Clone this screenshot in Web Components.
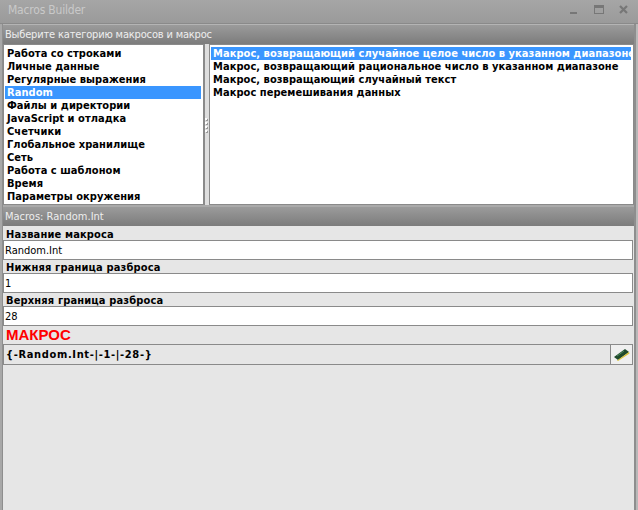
<!DOCTYPE html>
<html>
<head>
<meta charset="utf-8">
<style>
  html, body { margin: 0; height: 100%; }
  body { background: #e6e6e6; font-family: "DejaVu Sans", sans-serif; overflow: hidden; }
</style>
</head>
<body>
<macro-window></macro-window>
<script>
class TitleBar extends HTMLElement {
  constructor() {
    super();
    this.attachShadow({ mode: 'open' });
    this.shadowRoot.innerHTML = `
      <style>
        :host {
          display: flex;
          align-items: center;
          height: 23px;
          padding: 0 8px 4px 8px;
          box-sizing: border-box;
          background: linear-gradient(#a6a6a6, #9a9a9a);
          color: #c9c9c9;
          font: 12px "DejaVu Sans Condensed", "DejaVu Sans", sans-serif;
          font-stretch: condensed;
          letter-spacing: -.2px;
        }
        .name { flex: 1; }
        svg { display: block; }
      </style>
      <div class="name"><slot></slot></div>
      <svg width="60" height="14" viewBox="0 0 60 14">
        <rect x="0" y="9" width="7" height="2" fill="#777"/>
        <rect x="24.5" y="2.5" width="9" height="8" fill="none" stroke="#777"/>
        <rect x="24" y="2" width="10" height="3" fill="#777"/>
        <path d="M50 3l7 7M57 3l-7 7" stroke="#777" stroke-width="2.2" fill="none"/>
      </svg>
    `;
  }
}

class PanelHeader extends HTMLElement {
  constructor() {
    super();
    this.attachShadow({ mode: 'open' });
    this.shadowRoot.innerHTML = `
      <style>
        :host {
          display: flex;
          align-items: center;
          height: 19px;
          padding-left: 2px;
          box-sizing: border-box;
          background: linear-gradient(#9b9b9b, #7c7c7c);
          color: #eee;
          font: 11px "DejaVu Sans Condensed", "DejaVu Sans", sans-serif;
          font-stretch: condensed;
        }
      </style>
      <slot></slot>
    `;
  }
}

class ListBox extends HTMLElement {
  constructor() {
    super();
    this.attachShadow({ mode: 'open' });
    this.shadowRoot.innerHTML = `
      <style>
        :host {
          display: block;
          box-sizing: border-box;
          height: 100%;
          background: #fff;
          border: 1px solid #8a8a8a;
          padding: 2px 2px 0 1px;
          overflow: hidden;
        }
      </style>
      <slot></slot>
    `;
  }
}

class ListRow extends HTMLElement {
  constructor() {
    super();
    this.attachShadow({ mode: 'open' });
    this.shadowRoot.innerHTML = `
      <style>
        :host {
          display: block;
          height: 13px;
          padding-left: 2px;
          color: #000;
          font: bold 11px/13px "DejaVu Sans Condensed", "DejaVu Sans", sans-serif;
          font-stretch: condensed;
          letter-spacing: .05px;
          white-space: nowrap;
          overflow: hidden;
        }
        :host([selected]) { background: #3a96ff; color: #fff; }
      </style>
      <slot></slot>
    `;
  }
}

class FormField extends HTMLElement {
  constructor() {
    super();
    this.attachShadow({ mode: 'open' });
    this.shadowRoot.innerHTML = `
      <style>
        :host { display: block; }
        .label {
          height: 13px;
          padding-left: 3px;
          font: bold 11px/15px "DejaVu Sans Condensed", "DejaVu Sans", sans-serif;
          font-stretch: condensed;
          letter-spacing: .15px;
          color: #000;
        }
        .box {
          height: 18px;
          padding-left: 1px;
          background: #fff;
          border: 1px solid #8a8a8a;
          font: 11px/20px "DejaVu Sans Condensed", "DejaVu Sans", sans-serif;
          font-stretch: condensed;
          color: #000;
          overflow: hidden;
        }
      </style>
      <div class="label"></div>
      <div class="box"><slot></slot></div>
    `;
  }
  connectedCallback() {
    this.shadowRoot.querySelector('.label').textContent = this.dataset.label;
  }
}

class MacroOutput extends HTMLElement {
  constructor() {
    super();
    this.attachShadow({ mode: 'open' });
    this.shadowRoot.innerHTML = `
      <style>
        :host { display: block; }
        .title {
          height: 18px;
          padding-left: 3px;
          font: bold 15px/18px "Liberation Sans", sans-serif;
          color: #f00;
        }
        .row {
          display: flex;
          align-items: stretch;
          height: 19px;
          background: #e6e6e6;
          border: 1px solid #8a8a8a;
        }
        .code {
          flex: 1;
          padding-left: 2px;
          font: bold 11px/20px "DejaVu Sans Condensed", "DejaVu Sans", sans-serif;
          font-stretch: condensed;
          letter-spacing: .65px;
          color: #000;
        }
        .btn {
          width: 21px;
          display: flex;
          align-items: center;
          justify-content: center;
          background: #efefef;
          border-left: 1px solid #8a8a8a;
        }
      </style>
      <div class="title">МАКРОС</div>
      <div class="row">
        <div class="code"><slot></slot></div>
        <div class="btn">
          <svg width="17" height="13" viewBox="0 0 17 13">
            <path d="M1 9L12 1l4 3L5 12z" fill="#1f4a2c"/>
            <path d="M4 12.5L16 4l.5 1.5L5 13z" fill="#d8c23a"/>
            <path d="M4 8l7-5" stroke="#4f8a5c" fill="none"/>
          </svg>
        </div>
      </div>
    `;
  }
}

class MacroWindow extends HTMLElement {
  constructor() {
    super();
    this.attachShadow({ mode: 'open' });
    this.shadowRoot.innerHTML = `
      <style>
        :host {
          display: flex;
          flex-direction: column;
          height: 510px;
          background: #b4b4b4;
        }
        .shell {
          flex: 1;
          display: flex;
          flex-direction: column;
          border-top: 1px solid #8a8a8a;
          padding-top: 1px;
          padding-left: 3px;
          padding-right: 4px;
          background: linear-gradient(90deg, #a8a8a8 0 2px, #8e8e8e 2px 3px, transparent 3px calc(100% - 4px), #8e8e8e calc(100% - 4px) calc(100% - 2px), #b8b8b8 calc(100% - 2px));
        }
        .lists {
          display: grid;
          grid-template-columns: 201px 5px 425px;
          height: 161px;
        }
        .splitter {
          display: flex;
          flex-direction: column;
          align-items: flex-start;
          justify-content: center;
          gap: 2px;
          padding-left: 1px;
          background: #dedede;
          box-shadow: inset 1px 0 #8a8a8a;
        }
        .splitter i { width: 2px; height: 2px; background: #fff; box-shadow: 1px 1px #999; }
        .lower { flex: 1; background: #e6e6e6; padding: 1px 1px 0 0; }
        .gap { height: 2px; background: #aaa; }
      </style>
      <title-bar>Macros Builder</title-bar>
      <div class="shell">
        <panel-header style="letter-spacing:-.17px">Выберите категорию макросов и макрос</panel-header>
        <div class="lists">
          <list-box>
            <list-row>Работа со строками</list-row>
            <list-row>Личные данные</list-row>
            <list-row>Регулярные выражения</list-row>
            <list-row selected>Random</list-row>
            <list-row>Файлы и директории</list-row>
            <list-row>JavaScript и отладка</list-row>
            <list-row>Счетчики</list-row>
            <list-row>Глобальное хранилище</list-row>
            <list-row>Сеть</list-row>
            <list-row>Работа с шаблоном</list-row>
            <list-row>Время</list-row>
            <list-row>Параметры окружения</list-row>
          </list-box>
          <div class="splitter"><i></i><i></i><i></i><i></i></div>
          <list-box>
            <list-row selected>Макрос, возвращающий случайное целое число в указанном диапазоне</list-row>
            <list-row>Макрос, возвращающий рациональное число в указанном диапазоне</list-row>
            <list-row>Макрос, возвращающий случайный текст</list-row>
            <list-row>Макрос перемешивания данных</list-row>
          </list-box>
        </div>
        <div class="gap"></div>
        <panel-header>Macros: Random.Int</panel-header>
        <div class="lower">
          <form-field data-label="Название макроса">Random.Int</form-field>
          <form-field data-label="Нижняя граница разброса">1</form-field>
          <form-field data-label="Верхняя граница разброса">28</form-field>
          <macro-output>{-Random.Int-|-1-|-28-}</macro-output>
        </div>
      </div>
    `;
  }
}

customElements.define('title-bar', TitleBar);
customElements.define('panel-header', PanelHeader);
customElements.define('list-box', ListBox);
customElements.define('list-row', ListRow);
customElements.define('form-field', FormField);
customElements.define('macro-output', MacroOutput);
customElements.define('macro-window', MacroWindow);
</script>
</body>
</html>
